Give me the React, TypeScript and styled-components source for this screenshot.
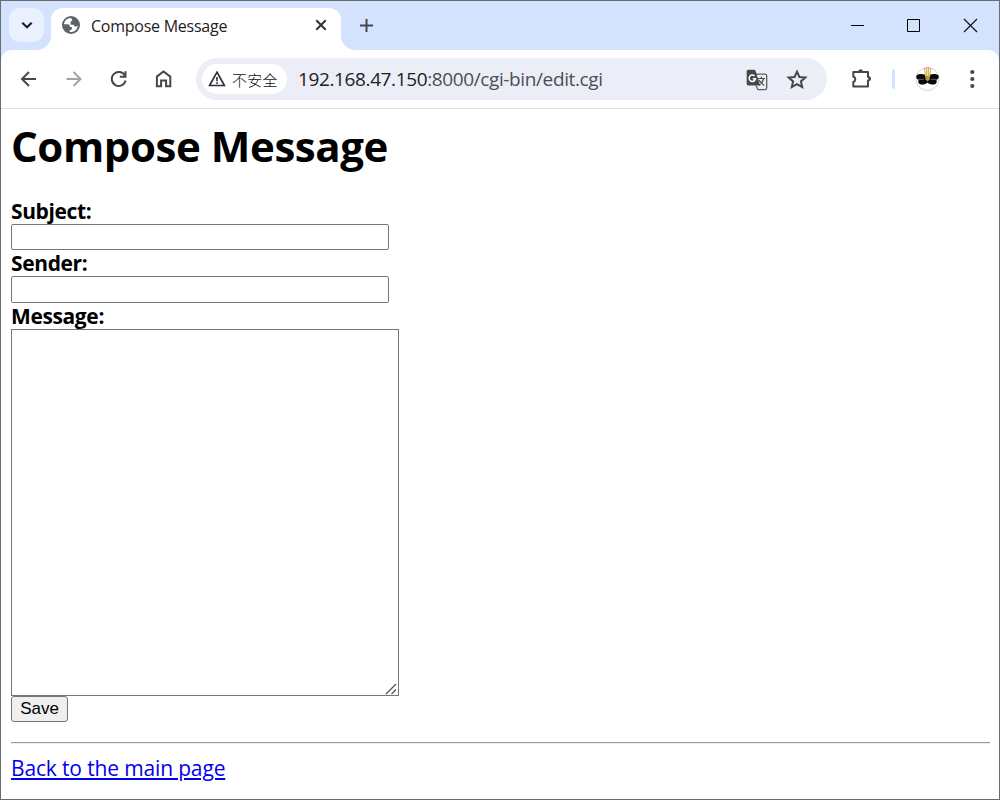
import React from 'react';
import styled, { createGlobalStyle } from 'styled-components';

const GlobalStyle = createGlobalStyle`
  *, *::before, *::after { box-sizing: border-box; }
  body { margin: 0; background: #fff; }
  svg { display: block; flex: none; }
`;

const uiFont = `'Open Sans', 'Noto Sans CJK SC', sans-serif`;

const Window = styled.div`
  width: 1000px;
  height: 800px;
  border: 1px solid #6b6c70;
  display: flex;
  flex-direction: column;
  overflow: hidden;
  background: #d3e2fd;
  font-family: ${uiFont};
`;

const TabStrip = styled.header`
  height: 49px;
  flex: none;
  display: flex;
  align-items: flex-start;
`;

const TabSearch = styled.button`
  width: 35px;
  height: 34px;
  margin: 7px 7px 0 8px;
  padding: 0;
  border: 0;
  border-radius: 11px;
  background: #e9f1fe;
  display: flex;
  align-items: center;
  justify-content: center;
`;

const Tab = styled.div`
  position: relative;
  width: 290px;
  height: 42px;
  margin-top: 7px;
  padding: 0 11px 8px 11px;
  border-radius: 12px 12px 0 0;
  background: #fff;
  display: flex;
  align-items: center;
  &::before, &::after {
    content: '';
    position: absolute;
    bottom: 0;
    width: 14px;
    height: 14px;
  }
  &::before {
    left: -14px;
    background: radial-gradient(circle at 0 0, transparent 13.5px, #fff 14.2px);
  }
  &::after {
    right: -14px;
    background: radial-gradient(circle at 100% 0, transparent 13.5px, #fff 14.2px);
  }
`;

const TabTitle = styled.span`
  flex: 1;
  margin-left: 11px;
  padding-top: 1px;
  font-size: 16px;
  line-height: 20px;
  letter-spacing: -0.25px;
  color: #1f2023;
  white-space: nowrap;
`;

const NewTab = styled.div`
  padding: 17px 0 0 18px;
  flex: 1;
`;

const WindowControls = styled.div`
  display: flex;
  gap: 42px;
  padding: 17px 21px 0 0;
`;

const Toolbar = styled.nav`
  height: 59px;
  flex: none;
  display: flex;
  align-items: center;
  padding: 0 15px 0 16px;
  background: #fff;
  border-bottom: 1px solid #dfe1e5;
  border-radius: 11px 11px 0 0;
`;

const NavIcons = styled.div`
  display: flex;
  gap: 21px;
  width: 179px;
`;

const AddressBar = styled.div`
  width: 631px;
  height: 42px;
  padding: 0 19px 0 6px;
  border-radius: 21px;
  background: #ebeef7;
  display: flex;
  align-items: center;
`;

const SecurityChip = styled.div`
  width: 85px;
  height: 30px;
  padding-left: 6px;
  border-radius: 15px;
  background: #fff;
  display: flex;
  align-items: center;
  gap: 6px;
  font: 300 15px/20px 'Noto Sans CJK SC', sans-serif;
  letter-spacing: 0.2px;
  color: #111;
  white-space: nowrap;
`;

const ChipText = styled.span`
  padding-top: 1px;
`;

const Url = styled.div`
  flex: 1;
  margin-left: 11px;
  font-size: 19px;
  line-height: 26px;
  letter-spacing: -0.38px;
  color: #4b4e54;
  white-space: nowrap;
`;

const Host = styled.span`
  color: #202124;
`;

const AddressActions = styled.div`
  display: flex;
  align-items: center;
  gap: 18px;
  padding-top: 1px;
`;

const ToolbarEnd = styled.div`
  flex: 1;
  display: flex;
  align-items: center;
  justify-content: flex-end;
`;

const Divider = styled.span`
  width: 3px;
  height: 20px;
  margin: 0 20px 0 18px;
  border-radius: 2px;
  background: #d3e3fd;
`;

const MenuButton = styled.div`
  margin-left: 19px;
`;

const Page = styled.main`
  flex: 1;
  padding: 8px 9px 0 10px;
  background: #fff;
  color: #000;
`;

const Heading = styled.h1`
  margin: 0;
  height: 81px;
  font-size: 42px;
  line-height: 57px;
  font-weight: 700;
  letter-spacing: -0.42px;
  white-space: nowrap;
`;

const Field = styled.label<{ $height: number }>`
  display: flex;
  flex-direction: column;
  align-items: flex-start;
  height: ${(p) => p.$height}px;
`;

const Caption = styled.span`
  height: 26px;
  font-size: 21px;
  line-height: 26px;
  font-weight: 700;
  letter-spacing: -0.38px;
`;

const TextInput = styled.input<{ $height: number }>`
  width: 378px;
  height: ${(p) => p.$height}px;
  padding: 0 4px;
  border: 1px solid #767676;
  border-radius: 2px;
  outline: none;
`;

const MessageArea = styled.textarea`
  display: block;
  width: 388px;
  height: 367px;
  padding: 3px;
  border: 1px solid #767676;
  border-radius: 0;
  resize: none;
  outline: none;
`;

const MessageBox = styled.div`
  position: relative;
  width: 388px;
`;

const Grip = styled.svg`
  position: absolute;
  right: 2px;
  bottom: 1px;
`;

const SaveButton = styled.button`
  display: block;
  width: 57px;
  height: 26px;
  padding: 0;
  border: 1px solid #767676;
  border-radius: 3px;
  background: #efefef;
  color: #000;
  font: 17px/22px 'Liberation Sans', Arial, sans-serif;
`;

const Rule = styled.hr`
  height: 2px;
  margin: 20px 0 8px;
  border: 0;
  border-top: 1px solid #9a9a9a;
  background: #ededed;
`;

const BackLink = styled.a`
  font-size: 21px;
  line-height: 32px;
  letter-spacing: -0.15px;
  color: #0000ee;
  text-decoration: underline;
  text-decoration-thickness: 2px;
  text-underline-offset: 2px;
  white-space: nowrap;
`;

const ink = '#474747';

const BackIcon = () => (
  <svg width="24" height="24" viewBox="0 0 24 24" fill="none" stroke={ink} strokeWidth="2">
    <path d="M19 12H5.5M12 5l-7 7 7 7" />
  </svg>
);

const ForwardIcon = () => (
  <svg width="24" height="24" viewBox="0.5 0 24 24" fill="none" stroke="#a3a3a3" strokeWidth="2">
    <path d="M5 12h13.5M12 5l7 7-7 7" />
  </svg>
);

const ReloadIcon = () => (
  <svg width="24" height="24" viewBox="0.5 0 24 24" fill="none" stroke={ink} strokeWidth="2">
    <path d="M18.5 8.7A7 7 0 1 0 19.1 13.6" />
    <path d="M19 4.2V9.8H13.3" />
  </svg>
);

const HomeIcon = () => (
  <svg width="24" height="24" viewBox="0.5 0 24 24" fill="none" stroke={ink} strokeWidth="2">
    <path d="M5.4 19.3V9.6L12 4.5l6.8 5.1v9.7h-4.2v-5.9H9.6v5.9z" />
  </svg>
);

const GlobeIcon = () => (
  <svg width="18" height="18" viewBox="0 0 18 18">
    <circle cx="9" cy="9" r="9" fill="#5f6368" />
    <path d="M8.7 1.9C5 2 2.3 4.7 2 8.3h3.8c1.2 0 2 .7 2 1.8v1h2.1v2.3c-1.8.2-2.5.8-2.3 2.5 4.2.7 8-2.4 8.2-6.5-.5.8-1.1 1.1-2 1.1-1.2 0-2-.7-2.1-1.8H8.6V6.5c0-1 .6-1.6 1.7-1.7-.1-1.3-.5-2.1-1.6-2.9z" fill="#fff" />
  </svg>
);

const WarningIcon = () => (
  <svg width="18" height="18" viewBox="0 0 18 18" fill="none" stroke="#303134" strokeWidth="1.7">
    <path d="M9 2.2L16.4 15.5H1.6z" />
    <path d="M9 7v4.2M9 12.2v1.7" strokeWidth="1.6" />
  </svg>
);

const TranslateIcon = () => (
  <svg width="22" height="22" viewBox="0 0 22 22" fill="none">
    <path d="M8.5 5.2H19a1.7 1.7 0 0 1 1.7 1.7v12.100a1.700 1.700 0 0 1-1.700 1.700h-7l-2-4" stroke="#5c5e62" strokeWidth="1.3" />
    <path d="M2.3.8h5.5c1 0 1.600.5 1.900 1.400l4.400 14.400H2.500A1.800 1.800 0 0 1 .7 14.800V2.500C.7 1.500 1.400.8 2.300.8z" fill={ink} />
    <path d="M8.500 6.900a3.200 3.200 0 1 0 1 2.800H6.700" stroke="#fff" strokeWidth="1.500" />
    <path d="M11.800 9.500h7.200M15.300 7.800v1.700M17.600 9.700c-.7 3-2.500 5-4.300 6.500M13 11c1.100 2.100 2.600 3.700 5.200 5.400" stroke={ink} strokeWidth="1.200" />
  </svg>
);

const StarIcon = () => (
  <svg width="22" height="22" viewBox="0 0.500 22 22" fill="none" stroke={ink} strokeWidth="2">
    <path d="M11 3.200l2.400 5.300 5.900.5-4.400 3.900 1.300 5.700L11 15.600l-5.200 3L7.100 12.900 2.700 9l5.900-.5z" />
  </svg>
);

const PuzzleIcon = () => (
  <svg width="24" height="24" viewBox="1 0.500 24 24">
    <path d="M4.300 5.400H19v5.100a1.600 1.600 0 0 1 0 3.600v6H4.300v-4.600a2.900 2.900 0 0 0 0-5.500z" fill="none" stroke={ink} strokeWidth="2" strokeLinejoin="round" />
    <path d="M9.300 5a2.300 2.300 0 0 1 4.600 0zM19.500 10a2.300 2.300 0 0 1 0 4.600z" fill={ink} />
  </svg>
);

const Avatar = () => (
  <svg width="26" height="26" viewBox="0.500 0 26 26">
    <circle cx="13" cy="13" r="11.500" fill="#fff" stroke="#d5d6d8" />
    <path d="M13 10.200C10 7.500 4.500 7.500 2.200 9.300c-1.200 1.800 0 3.900 1.900 4.700-.8 1.600-.2 3.600 1.400 4.300 2.900.9 5.600-.2 7.500-1.900 1.900 1.700 4.600 2.800 7.500 1.900 1.600-.7 2.200-2.700 1.400-4.300 1.900-.8 3.100-2.900 1.900-4.700-2.300-1.800-7.800-1.800-10.800.9z" fill="#080808" />
    <path d="M3.500 13.300h6M16.500 13.300h6" stroke="#8a8a8a" strokeWidth=".7" />
    <path d="M10.400 4.200l.8 7M12.200 3v8.800M13.900 3v8.800M15.800 4.200l-.8 7" stroke="#d7b950" strokeWidth="1.200" />
    <path d="M9.600 3h1.200M11.600 2h1.200M13.400 2h1.200M15.400 3h1.200" stroke="#d07a5a" strokeWidth="1.400" />
    <path d="M11 10.500h4.200v2.800l-2.100 2.200-2.100-2.200z" fill="#b89a3c" />
  </svg>
);

const MenuIcon = () => (
  <svg width="24" height="24" viewBox="-0.300 0 24 24" fill={ink}>
    <circle cx="12" cy="5" r="2.1" />
    <circle cx="12" cy="12" r="2.1" />
    <circle cx="12" cy="19" r="2.1" />
  </svg>
);

export default function App() {
  return (
    <>
      <GlobalStyle />
      <Window>
        <TabStrip>
          <TabSearch aria-label="Search tabs">
            <svg width="14" height="14" viewBox="0 0 14 14" fill="none" stroke="#202124" strokeWidth="2.2">
              <path d="M2.3 4.7L7 9.3l4.7-4.6" />
            </svg>
          </TabSearch>
          <Tab>
            <GlobeIcon />
            <TabTitle>Compose Message</TabTitle>
            <svg width="18" height="18" viewBox="0 0 18 18" stroke="#303134" strokeWidth="2">
              <path d="M4.3 4.3l9.4 9.4M13.7 4.3l-9.4 9.4" />
            </svg>
          </Tab>
          <NewTab>
            <svg width="15" height="15" viewBox="0 0 15 15" stroke="#474747" strokeWidth="2">
              <path d="M7.5 1v13M1 7.500h13" />
            </svg>
          </NewTab>
          <WindowControls>
            <svg width="15" height="15" viewBox="0 0 15 15" stroke="#000">
              <path d="M2 7.5h13" />
            </svg>
            <svg width="15" height="15" viewBox="0 0 15 15" fill="none" stroke="#000">
              <path d="M1.5 1.5h12v12h-12z" />
            </svg>
            <svg width="15" height="15" viewBox="0 0 15 15" stroke="#111">
              <path d="M1 1l13 13M14 1L1 14" strokeWidth="1.2" />
            </svg>
          </WindowControls>
        </TabStrip>
        <Toolbar>
          <NavIcons>
            <BackIcon />
            <ForwardIcon />
            <ReloadIcon />
            <HomeIcon />
          </NavIcons>
          <AddressBar>
            <SecurityChip>
              <WarningIcon />
              <ChipText>不安全</ChipText>
            </SecurityChip>
            <Url>
              <Host>192.168.47.150</Host>:8000/cgi-bin/edit.cgi
            </Url>
            <AddressActions>
              <TranslateIcon />
              <StarIcon />
            </AddressActions>
          </AddressBar>
          <ToolbarEnd>
            <PuzzleIcon />
            <Divider />
            <Avatar />
            <MenuButton>
              <MenuIcon />
            </MenuButton>
          </ToolbarEnd>
        </Toolbar>
        <Page>
          <Heading>Compose Message</Heading>
          <Field $height={52}>
            <Caption>Subject:</Caption>
            <TextInput $height={26} />
          </Field>
          <Field $height={53}>
            <Caption>Sender:</Caption>
            <TextInput $height={27} />
          </Field>
          <Field $height={26}>
            <Caption>Message:</Caption>
          </Field>
          <MessageBox>
            <MessageArea />
            <Grip width="12" height="12" viewBox="0 0 12 12" stroke="#555" strokeWidth="1.3">
              <path d="M1 11L11 1M6.5 11L11 6.5" />
            </Grip>
          </MessageBox>
          <SaveButton>Save</SaveButton>
          <Rule />
          <BackLink href="#">Back to the main page</BackLink>
        </Page>
      </Window>
    </>
  );
}
